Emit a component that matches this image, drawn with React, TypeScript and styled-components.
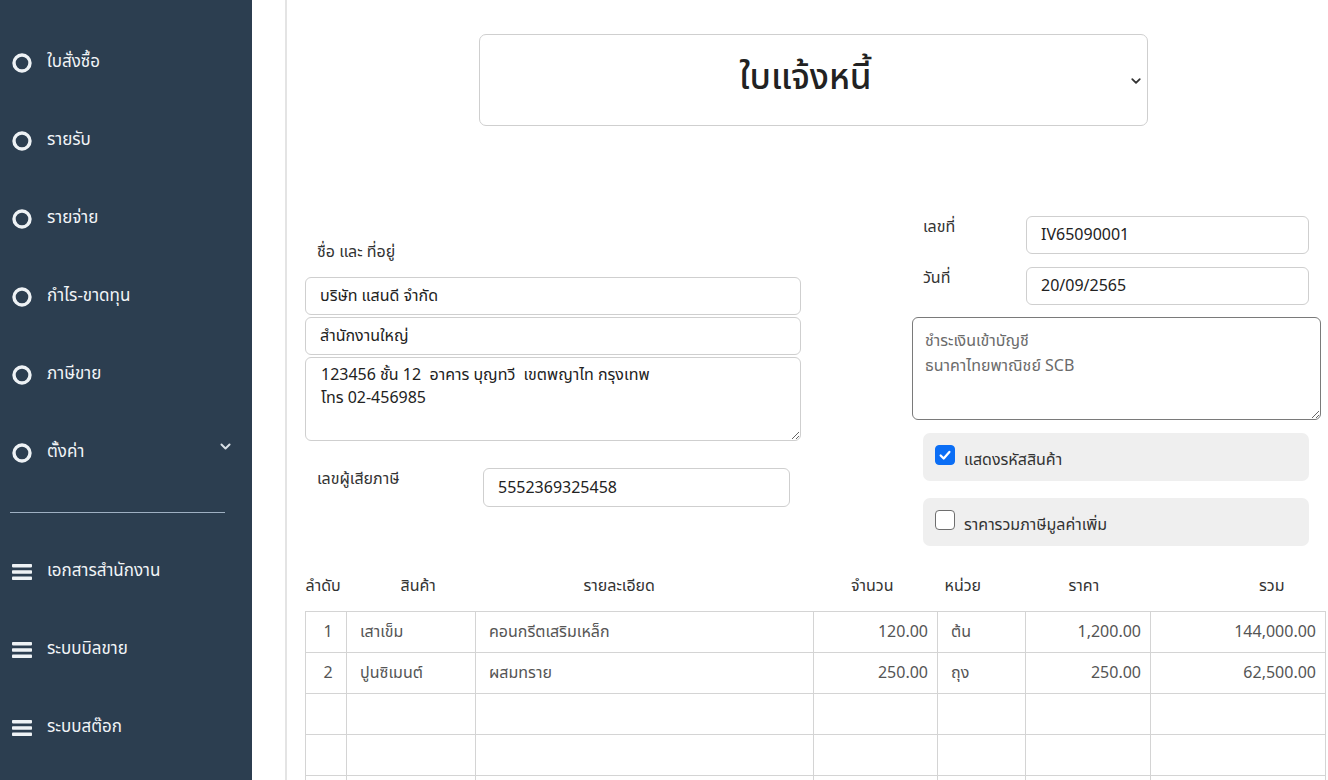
import React from 'react';
import styled, { createGlobalStyle } from 'styled-components';

const GlobalStyle = createGlobalStyle`
  html, body {
    margin: 0;
    padding: 0;
    overflow: hidden;
    background: #ffffff;
  }
  body {
    font-family: 'Noto Sans Thai', Tahoma, 'Noto Sans', 'DejaVu Sans', sans-serif;
    color: #333333;
  }
  * {
    box-sizing: border-box;
  }
`;

const sidebarBg = '#2c3e50';
const inputBorder = '#cfcfcf';

type MenuItem = {
  label: string;
  icon: 'ring' | 'bars';
  hasChevron?: boolean;
};

const mainMenu: MenuItem[] = [
  { label: 'ใบสั่งซื้อ', icon: 'ring' },
  { label: 'รายรับ', icon: 'ring' },
  { label: 'รายจ่าย', icon: 'ring' },
  { label: 'กำไร-ขาดทุน', icon: 'ring' },
  { label: 'ภาษีขาย', icon: 'ring' },
  { label: 'ตั้งค่า', icon: 'ring', hasChevron: true },
];

const systemMenu: MenuItem[] = [
  { label: 'เอกสารสำนักงาน', icon: 'bars' },
  { label: 'ระบบบิลขาย', icon: 'bars' },
  { label: 'ระบบสต๊อก', icon: 'bars' },
];

type Column = {
  title: string;
  width: number;
  headAlign: 'left' | 'right';
  headPad: number;
  cellAlign: 'left' | 'right' | 'center';
};

const columns: Column[] = [
  { title: 'ลำดับ', width: 41, headAlign: 'left', headPad: 0, cellAlign: 'center' },
  { title: 'สินค้า', width: 129, headAlign: 'left', headPad: 54, cellAlign: 'left' },
  { title: 'รายละเอียด', width: 338, headAlign: 'left', headPad: 108, cellAlign: 'left' },
  { title: 'จำนวน', width: 124, headAlign: 'right', headPad: 44, cellAlign: 'right' },
  { title: 'หน่วย', width: 88, headAlign: 'left', headPad: 7, cellAlign: 'left' },
  { title: 'ราคา', width: 125, headAlign: 'left', headPad: 43, cellAlign: 'right' },
  { title: 'รวม', width: 175, headAlign: 'right', headPad: 41, cellAlign: 'right' },
];

const rows: string[][] = [
  ['1', 'เสาเข็ม', 'คอนกรีตเสริมเหล็ก', '120.00', 'ต้น', '1,200.00', '144,000.00'],
  ['2', 'ปูนซิเมนต์', 'ผสมทราย', '250.00', 'ถุง', '250.00', '62,500.00'],
  ['', '', '', '', '', '', ''],
  ['', '', '', '', '', '', ''],
  ['', '', '', '', '', '', ''],
];

const RingIcon = () => (
  <svg width='20' height='20' viewBox='0 0 20 20'>
    <circle cx='10' cy='10' r='8' fill='none' stroke='#eef2f5' strokeWidth='3.4' />
  </svg>
);

const BarsIcon = () => (
  <svg width='20' height='18' viewBox='0 0 20 18'>
    <rect x='0' y='1' width='20' height='3.4' rx='0.8' fill='#eef2f5' />
    <rect x='0' y='7.3' width='20' height='3.4' rx='0.8' fill='#eef2f5' />
    <rect x='0' y='13.6' width='20' height='3.4' rx='0.8' fill='#eef2f5' />
  </svg>
);

const ChevronDown = ({ size, color }: { size: number; color: string }) => (
  <svg width={size} height={size} viewBox='0 0 16 16'>
    <path
      d='M3 5.5 L8 10.5 L13 5.5'
      fill='none'
      stroke={color}
      strokeWidth='2.4'
      strokeLinecap='round'
      strokeLinejoin='round'
    />
  </svg>
);

const CheckMark = () => (
  <svg width='14' height='14' viewBox='0 0 16 16'>
    <path
      d='M3 8.5 L6.5 12 L13 4.5'
      fill='none'
      stroke='#ffffff'
      strokeWidth='2.6'
      strokeLinecap='round'
      strokeLinejoin='round'
    />
  </svg>
);

const SidebarLink = ({ item }: { item: MenuItem }) => (
  <NavItem>
    <NavIcon>{item.icon === 'ring' ? <RingIcon /> : <BarsIcon />}</NavIcon>
    <NavLabel>{item.label}</NavLabel>
    {item.hasChevron && (
      <NavChevron>
        <ChevronDown size={13} color='#d9e0e6' />
      </NavChevron>
    )}
  </NavItem>
);

const OptionCheck = ({ label, checked }: { label: string; checked: boolean }) => (
  <OptionBox>
    <CheckBox checked={checked}>{checked && <CheckMark />}</CheckBox>
    <OptionLabel>{label}</OptionLabel>
  </OptionBox>
);

export default function App() {
  return (
    <>
      <GlobalStyle />
      <Layout>
        <Sidebar>
          {mainMenu.map((item) => (
            <SidebarLink key={item.label} item={item} />
          ))}
          <Divider />
          {systemMenu.map((item) => (
            <SidebarLink key={item.label} item={item} />
          ))}
        </Sidebar>

        <Main>
          <Card>
            <DocSelect>
              <DocTitle>ใบแจ้งหนี้</DocTitle>
              <SelectChevron>
                <ChevronDown size={12} color='#333' />
              </SelectChevron>
            </DocSelect>

            <FormGrid>
              <LeftColumn>
                <FieldTitle>ชื่อ และ ที่อยู่</FieldTitle>
                <StackedFields>
                  <TextInput readOnly value='บริษัท แสนดี จำกัด' />
                  <TextInput readOnly value='สำนักงานใหญ่' />
                  <AddressArea
                    readOnly
                    value={'123456 ชั้น 12  อาคาร บุญทวี  เขตพญาไท กรุงเทพ\nโทร 02-456985'}
                  />
                </StackedFields>
                <TaxRow>
                  <TaxLabel>เลขผู้เสียภาษี</TaxLabel>
                  <TaxInput readOnly value='5552369325458' />
                </TaxRow>
              </LeftColumn>

              <RightColumn>
                <InfoRow>
                  <InfoLabel>เลขที่</InfoLabel>
                  <InfoInput readOnly value='IV65090001' />
                </InfoRow>
                <InfoRow>
                  <InfoLabel>วันที่</InfoLabel>
                  <InfoInput readOnly value='20/09/2565' />
                </InfoRow>
                <NoteArea readOnly value={'ชำระเงินเข้าบัญชี\nธนาคาไทยพาณิชย์ SCB'} />
                <OptionCheck label='แสดงรหัสสินค้า' checked />
                <OptionCheck label='ราคารวมภาษีมูลค่าเพิ่ม' checked={false} />
              </RightColumn>
            </FormGrid>

            <ItemTable>
              <colgroup>
                {columns.map((col) => (
                  <col key={col.title} style={{ width: col.width }} />
                ))}
              </colgroup>
              <thead>
                <tr>
                  {columns.map((col) => (
                    <HeadCell key={col.title} align={col.headAlign} pad={col.headPad}>
                      {col.title}
                    </HeadCell>
                  ))}
                </tr>
              </thead>
              <tbody>
                {rows.map((row, r) => (
                  <tr key={r}>
                    {row.map((value, c) => (
                      <BodyCell key={c} align={columns[c].cellAlign}>
                        {value}
                      </BodyCell>
                    ))}
                  </tr>
                ))}
              </tbody>
            </ItemTable>
          </Card>
        </Main>
      </Layout>
    </>
  );
}

const Layout = styled.div`
  display: flex;
  width: 100vw;
  height: 100vh;
  overflow: hidden;
`;

const Sidebar = styled.nav`
  flex: 0 0 252px;
  background: ${sidebarBg};
  padding-top: 24px;
  display: flex;
  flex-direction: column;
`;

const NavItem = styled.div`
  display: flex;
  align-items: center;
  height: 78px;
  padding-left: 12px;
  padding-right: 20px;
  color: #f1f4f7;
`;

const NavIcon = styled.span`
  display: flex;
  align-items: center;
  width: 20px;
  margin-right: 15px;
`;

const NavLabel = styled.span`
  font-size: 17px;
  line-height: 24px;
  margin-top: -2px;
`;

const NavChevron = styled.span`
  display: flex;
  margin-left: auto;
  margin-top: -14px;
`;

const Divider = styled.hr`
  margin: 20px 27px 20px 10px;
  border: none;
  border-top: 1px solid #9fb0c2;
  height: 0;
`;

const Main = styled.main`
  flex: 1;
  padding-left: 33px;
  min-width: 0;
`;

const Card = styled.section`
  width: 1043px;
  height: 100%;
  border-left: 2px solid #e4e4e4;
  padding: 34px 0 0 18px;
`;

const DocSelect = styled.div`
  position: relative;
  display: flex;
  align-items: center;
  justify-content: center;
  width: 669px;
  height: 92px;
  margin-left: 174px;
  border: 1px solid ${inputBorder};
  border-radius: 7px;
  background: #fff;
`;

const DocTitle = styled.span`
  font-size: 35px;
  font-weight: 500;
  color: #222;
  margin-left: -16px;
  margin-top: -4px;
`;

const SelectChevron = styled.span`
  position: absolute;
  right: 5px;
  top: 40px;
  display: flex;
`;

const FormGrid = styled.div`
  display: grid;
  grid-template-columns: 496px 409px;
  column-gap: 111px;
  margin-top: 90px;
`;

const LeftColumn = styled.div`
  display: flex;
  flex-direction: column;
  padding-top: 24px;
`;

const FieldTitle = styled.div`
  font-size: 16px;
  line-height: 24px;
  padding-left: 12px;
  margin-bottom: 13px;
  color: #333;
`;

const StackedFields = styled.div`
  display: flex;
  flex-direction: column;
  gap: 2px;
`;

const TextInput = styled.input`
  width: 100%;
  height: 38px;
  border: 1px solid ${inputBorder};
  border-radius: 6px;
  padding: 0 14px;
  font: inherit;
  font-size: 16px;
  color: #222;
  background: #fff;
  outline: none;
`;

const AddressArea = styled.textarea`
  width: 100%;
  height: 84px;
  border: 1px solid ${inputBorder};
  border-radius: 6px;
  padding: 6px 15px;
  font: inherit;
  font-size: 16px;
  line-height: 23px;
  color: #222;
  background: #fff;
  resize: vertical;
  outline: none;
`;

const TaxRow = styled.div`
  display: flex;
  align-items: flex-start;
  margin-top: 27px;
`;

const TaxLabel = styled.div`
  width: 178px;
  padding-left: 12px;
  font-size: 16px;
  line-height: 22px;
  color: #333;
`;

const TaxInput = styled(TextInput)`
  width: 307px;
  height: 39px;
`;

const RightColumn = styled.div`
  display: flex;
  flex-direction: column;
`;

const InfoRow = styled.div`
  display: flex;
  align-items: flex-start;
  padding: 0 12px 0 11px;
  margin-bottom: 13px;
`;

const InfoLabel = styled.div`
  width: 103px;
  font-size: 16px;
  line-height: 22px;
  color: #333;
`;

const InfoInput = styled(TextInput)`
  flex: 1;
  width: auto;
`;

const NoteArea = styled.textarea`
  width: 100%;
  height: 103px;
  margin-top: -1px;
  border: 1px solid #7a7a7a;
  border-radius: 6px;
  padding: 11px 12px;
  font: inherit;
  font-size: 16px;
  line-height: 25px;
  color: #6b6b6b;
  background: #fff;
  resize: vertical;
  outline: none;
`;

const OptionBox = styled.div`
  display: flex;
  align-items: center;
  height: 48px;
  margin: 13px 12px 4px 11px;
  padding-left: 12px;
  background: #efefef;
  border-radius: 7px;
`;

const CheckBox = styled.span<{ checked: boolean }>`
  display: flex;
  align-items: center;
  justify-content: center;
  width: 20px;
  height: 20px;
  margin-top: -4px;
  border-radius: 4px;
  background: ${(props) => (props.checked ? '#0b6ef5' : '#ffffff')};
  border: ${(props) => (props.checked ? '1px solid #0b6ef5' : '1.5px solid #6e6e6e')};
`;

const OptionLabel = styled.span`
  margin-left: 9px;
  margin-top: 6px;
  font-size: 16px;
  color: #333;
`;

const ItemTable = styled.table`
  width: 1020px;
  margin-top: 20px;
  border-collapse: collapse;
  table-layout: fixed;
`;

const HeadCell = styled.th<{ align: 'left' | 'right'; pad: number }>`
  height: 41px;
  padding: 0 ${(props) => (props.align === 'right' ? props.pad : 0)}px 8px
    ${(props) => (props.align === 'left' ? props.pad : 0)}px;
  text-align: ${(props) => props.align};
  font-weight: 400;
  font-size: 16px;
  color: #333;
  white-space: nowrap;
  vertical-align: middle;
`;

const BodyCell = styled.td<{ align: 'left' | 'right' | 'center' }>`
  height: 41px;
  padding: 0 9px 0 13px;
  border: 1px solid #d4d4d4;
  text-align: ${(props) => props.align};
  font-size: 16px;
  color: #555;
  white-space: nowrap;
  overflow: hidden;
`;
